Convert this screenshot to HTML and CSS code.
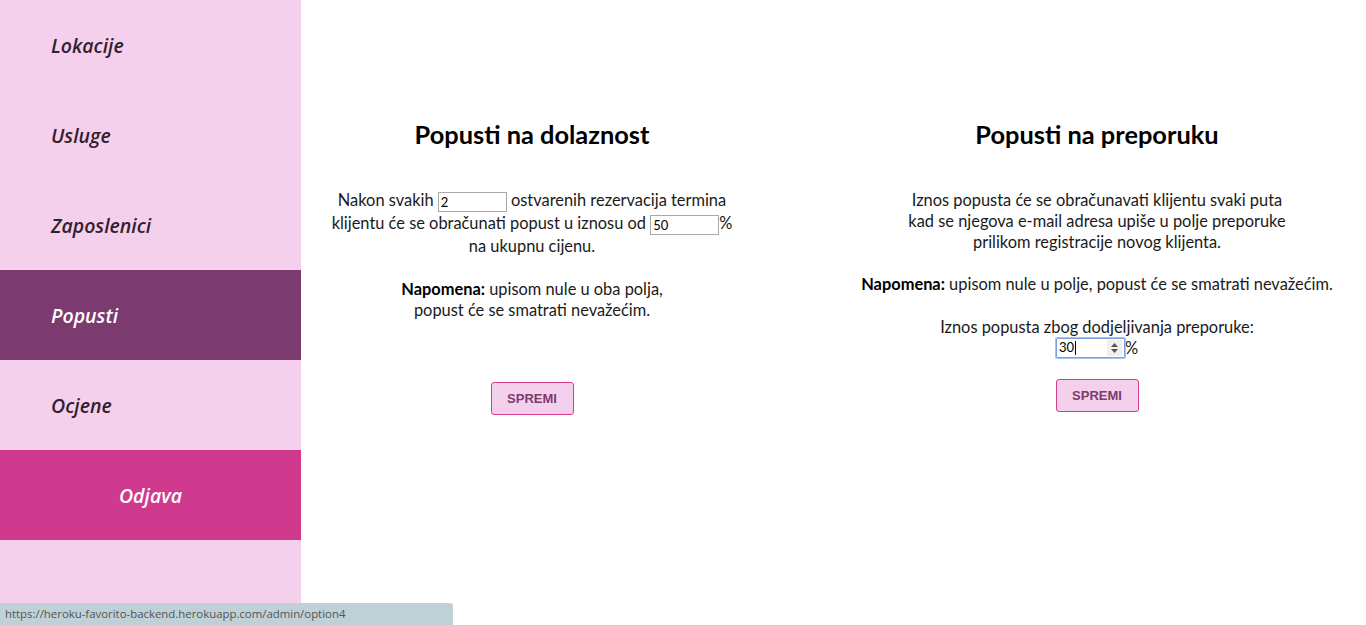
FILE: index.html
```html
<!DOCTYPE html>
<html lang="hr">
<head>
<meta charset="utf-8">
<title>Popusti</title>
<link rel="stylesheet" href="styles.css">
</head>
<body>
<div class="app">
  <nav class="sidebar">
    <a class="nav-item" href="#">Lokacije</a>
    <a class="nav-item" href="#">Usluge</a>
    <a class="nav-item" href="#">Zaposlenici</a>
    <a class="nav-item active" href="#">Popusti</a>
    <a class="nav-item" href="#">Ocjene</a>
    <a class="nav-item logout" href="#">Odjava</a>
  </nav>
  <main class="main">
    <section class="col col-left">
      <h2 class="title">Popusti na dolaznost</h2>
      <p class="text text-inputs">Nakon svakih <input class="field field-a" type="text" value="2"> ostvarenih rezervacija termina<br>klijentu će se obračunati popust u iznosu od <input class="field field-b" type="text" value="50">%<br>na ukupnu cijenu.</p>
      <p class="text note"><b>Napomena:</b> upisom nule u oba polja,<br>popust će se smatrati nevažećim.</p>
      <button class="btn btn-left">SPREMI</button>
    </section>
    <section class="col col-right">
      <h2 class="title">Popusti na preporuku</h2>
      <p class="text">Iznos popusta će se obračunavati klijentu svaki puta<br>kad se njegova e-mail adresa upiše u polje preporuke<br>prilikom registracije novog klijenta.</p>
      <p class="text note"><b>Napomena:</b> upisom nule u polje, popust će se smatrati nevažećim.</p>
      <p class="text amount">Iznos popusta zbog dodjeljivanja preporuke:<br><span class="num-wrap"><span class="num"><span class="num-val">30</span><span class="caret"></span><span class="spin"><svg width="9" height="12" viewBox="0 0 9 12"><path d="M4.5 1 L8 5 H1 Z M4.5 11 L8 7 H1 Z" fill="#555"/></svg></span></span>%</span></p>
      <button class="btn btn-right">SPREMI</button>
    </section>
  </main>
</div>
<div class="statusbar">https://heroku-favorito-backend.herokuapp.com/admin/option4</div>
</body>
</html>
```
FILE: styles.css
```css
html, body {
  margin: 0;
  padding: 0;
  background: #ffffff;
}
body {
  font-family: Lato, "Noto Sans", sans-serif;
  font-size: 16.4px;
  color: #1a1a1a;
  height: 625px;
  overflow: hidden;
}
.app {
  display: flex;
  min-height: 625px;
}
.sidebar {
  width: 301px;
  flex: 0 0 301px;
  background: #f5d0ec;
  display: flex;
  flex-direction: column;
  min-height: 625px;
}
.nav-item {
  display: flex;
  align-items: center;
  height: 90px;
  padding-left: 51px;
  font-family: "Open Sans", sans-serif;
  font-style: italic;
  font-weight: 600;
  font-size: 19.5px;
  color: #33202f;
  text-decoration: none;
  box-sizing: border-box;
}
.nav-item.active {
  background: #7b3b6e;
  color: #ffffff;
}
.nav-item.logout {
  background: #cf3a8f;
  color: #ffffff;
  justify-content: center;
  padding-left: 0;
}
.main {
  flex: 1;
  display: grid;
  grid-template-columns: 462px 462px;
  column-gap: 103px;
  align-items: start;
}
.col {
  display: flex;
  flex-direction: column;
  align-items: center;
  padding-top: 118px;
}
.title {
  margin: 0;
  font-size: 25.4px;
  line-height: 32px;
  font-weight: 700;
  color: #000;
  white-space: nowrap;
}
.text {
  margin: 0;
  text-align: center;
  white-space: nowrap;
  line-height: 21px;
}
.text b {
  font-weight: 700;
  color: #000;
}
.text-inputs {
  line-height: 23px;
  margin-top: 38px;
}
.col-right .title + .text {
  margin-top: 39px;
}
.col-left .note {
  margin-top: 21px;
}
.col-right .note {
  margin-top: 21px;
}
.amount {
  margin-top: 22px;
}
.field {
  width: 69px;
  height: 20px;
  box-sizing: border-box;
  border: 1px solid #a9a9a9;
  padding: 0 2px;
  font-family: Lato, sans-serif;
  font-size: 13px;
  color: #000;
  vertical-align: middle;
  margin: -4px 0;
}
.num-wrap {
  display: inline-flex;
  align-items: center;
  vertical-align: middle;
  margin: -7px 0 -3px;
}
.num {
  display: inline-flex;
  align-items: center;
  width: 69px;
  height: 20px;
  box-sizing: border-box;
  border: 1px solid #7b9fe0;
  box-shadow: 0 0 0 1px #a9c2ef;
  border-radius: 1px;
  padding-left: 2px;
  font-size: 13px;
  color: #000;
  position: relative;
}
.caret {
  display: inline-block;
  width: 1px;
  height: 14px;
  background: #000;
  margin-left: 1px;
}
.spin {
  position: absolute;
  right: 2px;
  top: 1px;
  width: 15px;
  height: 16px;
  background: #efefef;
  display: flex;
  align-items: center;
  justify-content: center;
}
.btn {
  width: 83px;
  height: 33px;
  box-sizing: border-box;
  background: #f5d0ec;
  border: 1px solid #d63d8f;
  border-radius: 3px;
  color: #7b3b6e;
  font-family: "Liberation Sans", Arial, sans-serif;
  font-weight: 700;
  font-size: 13px;
  padding: 0;
  cursor: pointer;
}
.btn-left {
  margin-top: 62px;
}
.btn-right {
  margin-top: 21px;
}
.statusbar {
  position: fixed;
  left: 0;
  bottom: 0;
  width: 453px;
  height: 22px;
  box-sizing: border-box;
  padding: 3px 0 0 5px;
  background: #bfd0d7;
  border-top-right-radius: 3px;
  color: #555;
  font-family: "Open Sans", sans-serif;
  font-size: 11.4px;
  line-height: 16px;
}
```
